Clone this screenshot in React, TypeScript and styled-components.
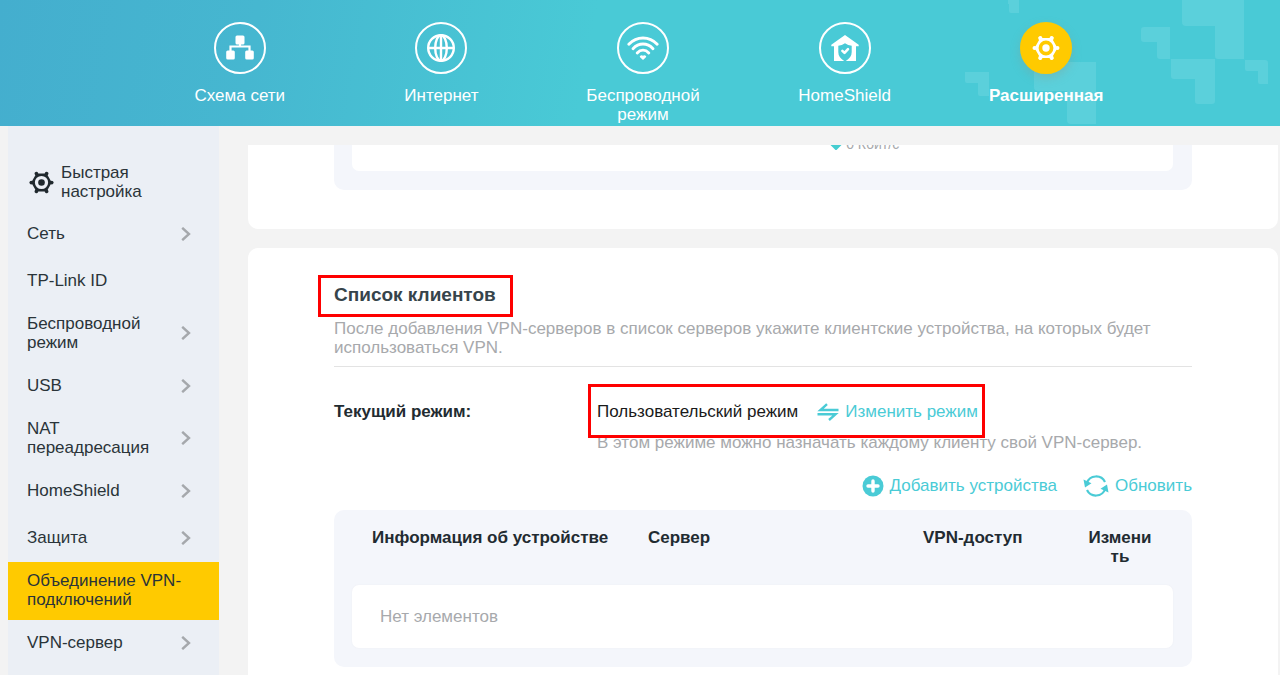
import React from "react";
import styled, { createGlobalStyle, css } from "styled-components";

const GlobalStyle = createGlobalStyle`
  *, *::before, *::after { box-sizing: border-box; }
  html, body { margin: 0; padding: 0; background: #f3f3f3; overflow: hidden; }
  body, button {
    font-family: "Liberation Sans", Arial, sans-serif;
    font-size: 17px;
    line-height: 19px;
    color: #2a3439;
  }
  h2, p, ul, dl, dd { margin: 0; padding: 0; }
  ul { list-style: none; }
  a { color: inherit; text-decoration: none; }
  svg { flex: none; }
`;

const Page = styled.div`
  display: flex;
  flex-direction: column;
  height: 100vh;
`;

/* ---------- top bar ---------- */

const TopBar = styled.header`
  position: relative;
  flex: none;
  min-height: 126px;
  padding: 22px 133px 0 139px;
  background: linear-gradient(100deg, #44aece 0%, #46b7d0 20%, #49cad6 46%, #49cad6 100%);
`;

const TopPattern = styled.svg`
  position: absolute;
  top: 0;
  right: 0;
  fill: #5bd0db;
`;

const TopNav = styled.nav`
  position: relative;
  display: grid;
  grid-template-columns: repeat(5, 1fr);
`;

const TopLink = styled.a<{ $active?: boolean }>`
  display: flex;
  flex-direction: column;
  align-items: center;
  gap: 12px;
  padding: 0 36px;
  color: #fff;
  text-align: center;
  font-weight: ${(p) => (p.$active ? 700 : 400)};
`;

const Badge = styled.span<{ $active?: boolean }>`
  display: flex;
  align-items: center;
  justify-content: center;
  width: 52px;
  height: 52px;
  border-radius: 50%;
  border: 2px solid #fff;
  ${(p) =>
    p.$active &&
    css`
      border-color: #ffca00;
      background: #ffca00;
      box-shadow: 0 4px 10px rgba(130, 160, 150, 0.4);
    `}
`;

/* ---------- body ---------- */

const Body = styled.div`
  flex: 1;
  display: flex;
  min-height: 0;
`;

const Sidebar = styled.nav`
  flex: none;
  width: 211px;
  margin-left: 8px;
  padding-top: 27px;
  background: #ebeff5;
  overflow: hidden;
`;

const SideLink = styled.a<{ $active?: boolean }>`
  display: flex;
  align-items: center;
  justify-content: space-between;
  min-height: 47px;
  padding: 9px 28px 11px 19px;
  background: ${(p) => (p.$active ? "#ffca00" : "transparent")};
`;

const SideLabel = styled.span`
  flex: none;
  width: 158px;
  margin-right: -14px;
`;

const SideHeading = styled.a`
  display: flex;
  align-items: center;
  gap: 7px;
  padding: 10px 40px 10px 21px;
`;

const Main = styled.main`
  flex: 1;
  min-width: 0;
  display: flex;
  flex-direction: column;
  gap: 19px;
  margin: 19px 2px 0 29px;
  overflow: hidden;
`;

const Card = styled.section`
  flex: none;
  padding: 37px 86px 39px;
  border-radius: 10px;
  background: #fff;
`;

const ScrolledCard = styled(Card)`
  display: flex;
  flex-direction: column;
  justify-content: flex-end;
  height: 84px;
  border-radius: 0 0 10px 10px;
  overflow: hidden;
`;

const Panel = styled.div`
  flex: none;
  padding: 0 19px 19px 18px;
  border-radius: 10px;
  background: #f4f6fb;
`;

const SpeedBox = styled.div`
  display: grid;
  grid-template-columns: 58% 1fr;
  padding: 19px 0;
  border-radius: 7px;
  background: #fff;
`;

const Speed = styled.span`
  grid-column: 2;
  display: flex;
  align-items: center;
  gap: 4px;
  padding-left: 2px;
  font-size: 14px;
  line-height: 16px;
  color: #a7a9ac;
`;

const Marked = styled.div<{ $inset: string }>`
  position: relative;
  width: fit-content;
  &::after {
    content: "";
    position: absolute;
    inset: ${(p) => p.$inset};
    border: 3px solid #fe0000;
    pointer-events: none;
  }
`;

const Title = styled.h2`
  font-size: 19px;
  line-height: 19px;
  color: #36444b;
`;

const Description = styled.p`
  margin-top: 15px;
  padding-bottom: 9px;
  border-bottom: 1px solid #e3e3e3;
  color: #a7a9ac;
`;

const Mode = styled.dl`
  display: grid;
  grid-template-columns: 263px 1fr;
  margin-top: 35px;
`;

const ModeLabel = styled.dt`
  font-weight: 700;
  color: #222b31;
`;

const ModeValue = styled.div`
  display: flex;
  align-items: center;
  gap: 19px;
  color: #1a1a1a;
`;

const Note = styled.p`
  margin-top: 12px;
  color: #a7a9ac;
`;

const Actions = styled.div`
  display: flex;
  justify-content: flex-end;
  gap: 26px;
  margin-top: 24px;
`;

const TextButton = styled.button`
  display: inline-flex;
  align-items: center;
  gap: 6px;
  height: 19px;
  padding: 0;
  border: 0;
  background: none;
  color: #4acbd6;
  cursor: pointer;
`;

const TablePanel = styled(Panel)`
  margin-top: 15px;
`;

const Table = styled.table`
  width: 100%;
  table-layout: fixed;
  border-spacing: 0;
`;

const HeadCell = styled.th<{ $width: string; $center?: boolean }>`
  width: ${(p) => p.$width};
  height: 75px;
  padding: ${(p) => (p.$center ? "18px 20px" : "18px 0 18px 20px")};
  vertical-align: top;
  text-align: ${(p) => (p.$center ? "center" : "left")};
  overflow-wrap: anywhere;
  color: #222b31;
`;

const EmptyCell = styled.td`
  height: 63px;
  padding: 0 28px;
  border-radius: 7px;
  background: #fff;
  box-shadow: 0 0 2px #eceef3;
  color: #a7a9ac;
`;

/* ---------- icons ---------- */

const MapIcon = () => (
  <svg width="30" height="28" viewBox="0 0 30 28" fill="#fff" aria-hidden="true">
    <rect x="10.5" y="1.5" width="9" height="9" rx="1.5" />
    <rect x="1.2" y="16.500" width="8.600" height="9" rx="1.5" />
    <rect x="20.200" y="16.500" width="8.600" height="9" rx="1.5" />
    <path d="M15 9v4M5.500 18v-5.500h19V18" fill="none" stroke="#fff" strokeWidth="2.200" />
  </svg>
);

const GlobeIcon = () => (
  <svg width="30" height="30" viewBox="0 0 30 30" fill="none" stroke="#fff" strokeWidth="2.400" aria-hidden="true">
    <circle cx="15" cy="15" r="12.800" />
    <ellipse cx="15" cy="15" rx="5.800" ry="12.800" />
    <path d="M15 2v26M2 15h26" />
  </svg>
);

const WifiIcon = () => (
  <svg width="34" height="26" viewBox="0 0 34 26" fill="none" stroke="#fff" strokeWidth="2.900" strokeLinecap="round" aria-hidden="true">
    <path d="M2.800 9.300C10.800.9 23.200.9 31.200 9.300" />
    <path d="M7 13.700C12.800 7.500 21.200 7.500 27 13.700" />
    <path d="M11.200 17.900C14.600 14.200 19.400 14.200 22.800 17.900" />
    <path d="M14 20.900q1.600-1.400 3-.2 1.400-1.200 3 .2.600.7-.3 1.600L17 25l-2.700-2.500q-.9-.9-.3-1.600z" fill="#fff" stroke="none" />
  </svg>
);

const HomeIcon = () => (
  <svg width="28" height="26" viewBox="0 0 28 26" aria-hidden="true">
    <path
      fill="#fff"
      d="M14 0 .3 9.800v1.400H3V26h10.200C9.300 23.500 7.300 20.800 7.300 17v-6.200q3.600-.3 6.700-2.600 3.100 2.300 6.700 2.600V17c0 3.800-2 6.500-5.900 9H25V11.200h2.700V9.800z"
    />
    <path d="m11.400 15.900 2.100 2 3.500-3.700" fill="none" stroke="#fff" strokeWidth="2.600" strokeLinecap="round" strokeLinejoin="round" />
  </svg>
);

const GEAR_TEETH = [0, 60, 120, 180, 240, 300];

const GearIcon = ({ size, color }: { size: number; color: string }) => (
  <svg width={size} height={size} viewBox="0 0 28 28" fill={color} aria-hidden="true">
    <path
      fillRule="evenodd"
      d="M25.500 14 19.750 23.960H8.250L2.500 14 8.250 4.040h11.500zM14 6.600a7.400 7.400 0 1 0 0 14.800 7.400 7.400 0 0 0 0-14.800z"
    />
    <circle cx="14" cy="14" r="3.700" />
    {GEAR_TEETH.map((angle) => (
      <circle key={angle} cx="25.400" cy="14" r="2.100" transform={`rotate(${angle} 14 14)`} />
    ))}
  </svg>
);

const Chevron = () => (
  <svg width="10" height="14" viewBox="0 0 10 14" fill="none" stroke="#a5a8ac" strokeWidth="2.400" aria-hidden="true">
    <path d="M1.200.8 8 7l-6.800 6.200" />
  </svg>
);

const SwapIcon = () => (
  <svg width="22" height="18" viewBox="0 0 22 18" fill="none" stroke="#4acbd6" strokeWidth="2.400" aria-hidden="true">
    <path d="M21.500 7H3.500L10 1.200M.5 11.300h18L12 17" />
  </svg>
);

const PlusIcon = () => (
  <svg width="22" height="22" viewBox="0 0 22 22" aria-hidden="true">
    <circle cx="11" cy="11" r="10.500" fill="#4acbd6" />
    <path d="M11 6v10M6 11h10" stroke="#fff" strokeWidth="3.400" strokeLinecap="round" />
  </svg>
);

const RefreshIcon = () => (
  <svg width="26" height="24" viewBox="0 0 26 24" fill="none" stroke="#4acbd6" strokeWidth="2.200" aria-hidden="true">
    <path d="M3.800 9A9.900 9.900 0 0 1 22 8M22.200 15A9.900 9.900 0 0 1 4 16" />
    <path d="M.5 5.500 2 13.500 8.500 9.300zM25.500 18.500 24 10.500 17.500 14.700z" fill="#4acbd6" stroke="none" />
  </svg>
);

const DownArrow = () => (
  <svg width="12" height="14" viewBox="0 0 12 14" fill="#45cdd0" aria-hidden="true">
    <path d="M4 0h4v7.500h4L6.500 13h-1L0 7.500h4z" />
  </svg>
);

/* ---------- data ---------- */

const topItems = [
  { label: "Схема сети", icon: <MapIcon /> },
  { label: "Интернет", icon: <GlobeIcon /> },
  { label: "Беспроводной режим", icon: <WifiIcon /> },
  { label: "HomeShield", icon: <HomeIcon /> },
  { label: "Расширенная", icon: <GearIcon size={28} color="#fff" />, active: true },
];

const sideItems = [
  { label: "Сеть", expandable: true },
  { label: "TP-Link ID" },
  { label: "Беспроводной режим", expandable: true },
  { label: "USB", expandable: true },
  { label: "NAT переадресация", expandable: true },
  { label: "HomeShield", expandable: true },
  { label: "Защита", expandable: true },
  { label: "Объединение VPN-подключений", active: true },
  { label: "VPN-сервер", expandable: true },
];

export default function App() {
  return (
    <Page>
      <GlobalStyle />
      <TopBar>
        <TopPattern width="320" height="126" viewBox="0 0 320 126" aria-hidden="true">
          <path d="M48 0h11v13H51q-2 0-2-2V4h-1z" />
          <path d="M222 0h62v59h-26q-3 0-3-3V26h-29q-4 0-4-4z" />
          <path d="M181 30q0-3 3-3h26v32h-10q-3 0-3-3V42h-13q-3 0-3-3z" />
          <path d="M211 59h44v42q0 3-3 3h-14q-3 0-3-3V79h-21q-3 0-3-3z" />
          <path d="M285 60h20q3 0 3 3v21h-8q-2 0-2-2V71h-11q-2 0-2-2z" />
          <path d="M5 72h24v24h-9q-2 0-2-2V83H7q-2 0-2-2z" />
          <path d="M74 62h62v62h-25q-4 0-4-4V91H78q-4 0-4-4z" />
        </TopPattern>
        <TopNav>
          {topItems.map((item) => (
            <TopLink key={item.label} href="#" $active={item.active}>
              <Badge $active={item.active}>{item.icon}</Badge>
              <span>{item.label}</span>
            </TopLink>
          ))}
        </TopNav>
      </TopBar>
      <Body>
        <Sidebar>
          <SideHeading href="#">
            <GearIcon size={25} color="#20292e" />
            <span>Быстрая настройка</span>
          </SideHeading>
          <ul>
            {sideItems.map((item) => (
              <li key={item.label}>
                <SideLink href="#" $active={item.active}>
                  <SideLabel>{item.label}</SideLabel>
                  {item.expandable && <Chevron />}
                </SideLink>
              </li>
            ))}
          </ul>
        </Sidebar>
        <Main>
          <ScrolledCard>
            <Panel>
              <SpeedBox>
                <Speed>
                  <DownArrow />0 Кбит/с
                </Speed>
              </SpeedBox>
            </Panel>
          </ScrolledCard>
          <Card>
            <Marked $inset="-10px -17px -13px -16px">
              <Title>Список клиентов</Title>
            </Marked>
            <Description>
              После добавления VPN-серверов в список серверов укажите клиентские устройства, на которых будет
              использоваться VPN.
            </Description>
            <Mode>
              <ModeLabel>Текущий режим:</ModeLabel>
              <dd>
                <Marked $inset="-18px -7px -17px -9px">
                  <ModeValue>
                    <span>Пользовательский режим</span>
                    <TextButton type="button">
                      <SwapIcon />
                      Изменить режим
                    </TextButton>
                  </ModeValue>
                </Marked>
                <Note>В этом режиме можно назначать каждому клиенту свой VPN-сервер.</Note>
              </dd>
            </Mode>
            <Actions>
              <TextButton type="button">
                <PlusIcon />
                Добавить устройства
              </TextButton>
              <TextButton type="button">
                <RefreshIcon />
                Обновить
              </TextButton>
            </Actions>
            <TablePanel>
              <Table>
                <thead>
                  <tr>
                    <HeadCell $width="276px">Информация об устройстве</HeadCell>
                    <HeadCell $width="auto">Сервер</HeadCell>
                    <HeadCell $width="164px">VPN-доступ</HeadCell>
                    <HeadCell $width="106px" $center>
                      Изменить
                    </HeadCell>
                  </tr>
                </thead>
                <tbody>
                  <tr>
                    <EmptyCell colSpan={4}>Нет элементов</EmptyCell>
                  </tr>
                </tbody>
              </Table>
            </TablePanel>
          </Card>
        </Main>
      </Body>
    </Page>
  );
}
